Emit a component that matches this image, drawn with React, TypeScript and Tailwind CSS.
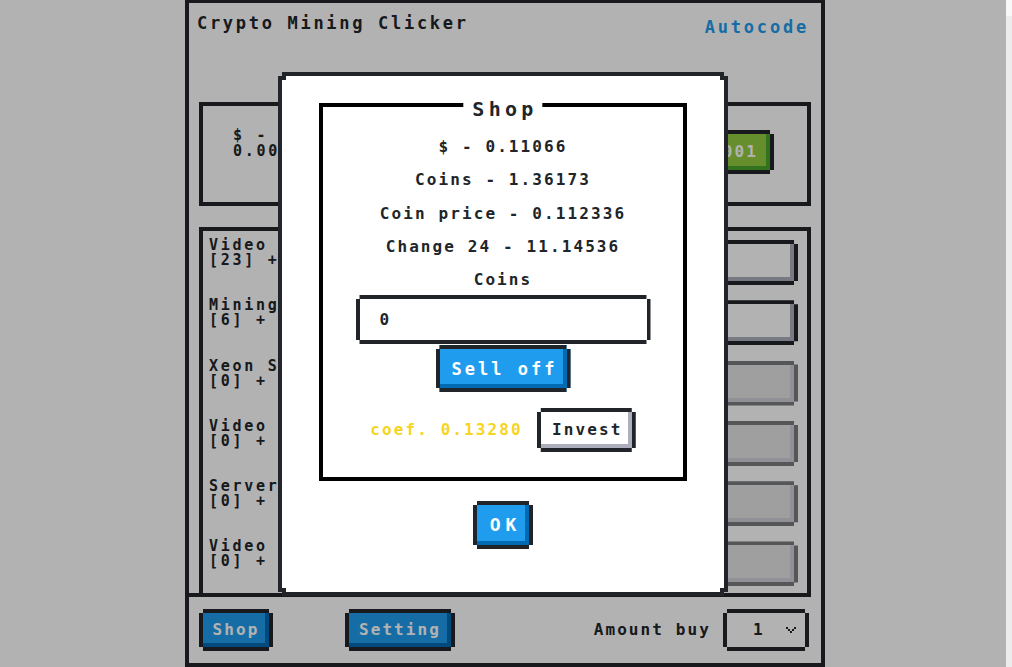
import React from "react";

// NES style pixel corners: cut a 4px square off every corner
const notch =
  "[clip-path:polygon(0_4px,4px_4px,4px_0,calc(100%_-_4px)_0,calc(100%_-_4px)_4px,100%_4px,100%_calc(100%_-_4px),calc(100%_-_4px)_calc(100%_-_4px),calc(100%_-_4px)_100%,4px_100%,4px_calc(100%_-_4px),0_calc(100%_-_4px))]";

type Variant = "primary" | "normal" | "success" | "disabled";

const looks: Record<Variant, string> = {
  primary: "bg-[#209cee] text-white shadow-[inset_-4px_-4px_#006bb3]",
  normal: "bg-white text-[#212529] shadow-[inset_-4px_-4px_#adafbc]",
  success: "bg-[#92cc41] text-white shadow-[inset_-4px_-4px_#4aa52e]",
  disabled: "bg-[#d3d3d3] text-[#212529] shadow-[inset_-4px_-4px_#adafbc] opacity-60",
};

function Btn({
  variant,
  className = "",
  children,
}: {
  variant: Variant;
  className?: string;
  children: React.ReactNode;
}) {
  return (
    <button
      type="button"
      className={`flex shrink-0 items-center justify-center whitespace-nowrap border-4 border-[#212529] ${notch} ${looks[variant]} ${className}`}
    >
      {children}
    </button>
  );
}

const items: { name: string; stat: string; price: string; variant: Variant }[] = [
  { name: "Video card", stat: "[23] + 0.00010", price: "2.3$", variant: "normal" },
  { name: "Mining rig", stat: "[6] + 0.00150", price: "9$", variant: "normal" },
  { name: "Xeon Server", stat: "[0] + 0.00600", price: "25$", variant: "disabled" },
  { name: "Video Station", stat: "[0] + 0.02000", price: "80$", variant: "disabled" },
  { name: "Server rack", stat: "[0] + 0.08000", price: "300$", variant: "disabled" },
  { name: "Video Cluster", stat: "[0] + 0.30000", price: "900$", variant: "disabled" },
];

function Game() {
  return (
    <div className="flex h-[667px] w-[640px] flex-col border-x-4 border-t-[3px] border-b-4 border-[#212529]">
      <header className="flex h-[99px] shrink-0 items-start justify-between pl-[8px] pr-[12px] pt-[10px]">
        <h1 className="text-[17px] leading-[20px] tracking-[2.7px]">Crypto Mining Clicker</h1>
        <a className="mt-[4px] text-[17px] leading-[20px] tracking-[2.8px] text-[#209cee]">Autocode</a>
      </header>

      <div className="mx-[10px] flex h-[104px] shrink-0 items-start justify-between border-4 border-[#212529] pl-[30px] pr-[33px] pt-[21px]">
        <div className="whitespace-nowrap text-[15px] leading-[16px] tracking-[2.7px]">
          <p>$ - 0.11066</p>
          <p>0.00866 / tap</p>
        </div>
        <Btn variant="success" className="mt-[3px] h-[44px] px-[12px] text-[16px] tracking-[2.1px]">
          + 0.001
        </Btn>
      </div>

      <div className="mx-[10px] mt-[21px] flex min-h-0 flex-1 flex-col gap-[13.3px] overflow-hidden border-x-4 border-t-4 border-[#212529] pl-[6px] pr-[9px] pt-[7px]">
        {items.map((it) => (
          <div key={it.name} className="flex shrink-0 items-start justify-between">
            <div className="whitespace-nowrap text-[15px] leading-[15px] tracking-[2.7px]">
              <p>{it.name}</p>
              <p>{it.stat}</p>
            </div>
            <Btn variant={it.variant} className="mt-[2px] h-[45px] w-[200px] text-[16px] tracking-[2.1px]">
              {it.price}
            </Btn>
          </div>
        ))}
      </div>

      <footer className="mr-[10px] flex h-[70px] shrink-0 items-center border-t-4 border-[#212529] pl-[10px] pr-[2px] text-[16px] tracking-[2.1px]">
        <Btn variant="primary" className="h-[42px] w-[74px]">
          Shop
        </Btn>
        <Btn variant="primary" className="ml-[72px] h-[42px] w-[110px]">
          Setting
        </Btn>
        <span className="ml-auto">Amount buy</span>
        <div
          className={`ml-[12px] flex h-[42px] w-[86px] items-center justify-between border-4 border-[#212529] bg-white pl-[26px] pr-[9px] ${notch}`}
        >
          <span>1</span>
          <svg width="10" height="6" viewBox="0 0 10 6" shapeRendering="crispEdges">
            <path d="M0 0h2v2H0zM8 0h2v2H8zM2 2h2v2H2zM6 2h2v2H6zM4 4h2v2H4z" fill="#212529" />
          </svg>
        </div>
      </footer>
    </div>
  );
}

function ShopDialog() {
  const lines = ["$ - 0.11066", "Coins - 1.36173", "Coin price - 0.112336", "Change 24 - 11.14536"];
  return (
    <div className={`w-[450px] bg-[#212529] p-[4px] ${notch}`}>
      <div className={`bg-white px-[37px] pb-[43px] pt-[27px] ${notch}`}>
        <div className="relative border-4 border-black px-[10px] pb-[25px] pt-[23px] text-[16px] tracking-[2.1px]">
          <h2 className="absolute left-1/2 top-[-9px] -translate-x-1/2 bg-white pl-[9px] pr-[5px] text-[20px] leading-[22px] tracking-[4.3px]">
            Shop
          </h2>
          {lines.map((l) => (
            <div key={l} className="flex h-[33.5px] items-center justify-center">
              {l}
            </div>
          ))}
          <div className="flex h-[32px] items-center justify-center">Coins</div>
          <input
            readOnly
            defaultValue="0"
            className={`mx-auto -mt-[1px] block h-[49px] w-[295px] border-4 border-[#212529] bg-white pl-[20px] outline-none ${notch}`}
          />
          <div className="mt-[1px] flex justify-center">
            <Btn variant="primary" className="h-[47px] w-[135px] pl-[3px] text-[17px] tracking-[3px]">
              Sell off
            </Btn>
          </div>
          <div className="mt-[16px] flex items-center justify-center gap-[14px]">
            <span className="text-[#f7d51d]">coef. 0.13280</span>
            <Btn variant="normal" className="h-[44px] w-[99px] pl-[2px]">
              Invest
            </Btn>
          </div>
        </div>
        <div className="mt-[20px] flex justify-center">
          <Btn variant="primary" className="h-[48px] w-[60px] pl-[5px] text-[18px] tracking-[5px]">
            OK
          </Btn>
        </div>
      </div>
    </div>
  );
}

export default function App() {
  return (
    <div className="flex h-[667px] w-full overflow-hidden bg-white font-['DejaVu_Sans_Mono','Liberation_Mono',monospace] font-bold leading-[20px] text-[#212529]">
      <div className="relative flex flex-1 justify-center pl-[4px]">
        <Game />
        <div className="absolute inset-0 bg-black/30" />
        <div className="absolute inset-x-0 top-[72px] flex justify-center">
          <ShopDialog />
        </div>
      </div>
      <div className="flex w-[6px] flex-col bg-[#ececec]">
        <div className="h-[16px] bg-[#f8f8f8]" />
      </div>
    </div>
  );
}
